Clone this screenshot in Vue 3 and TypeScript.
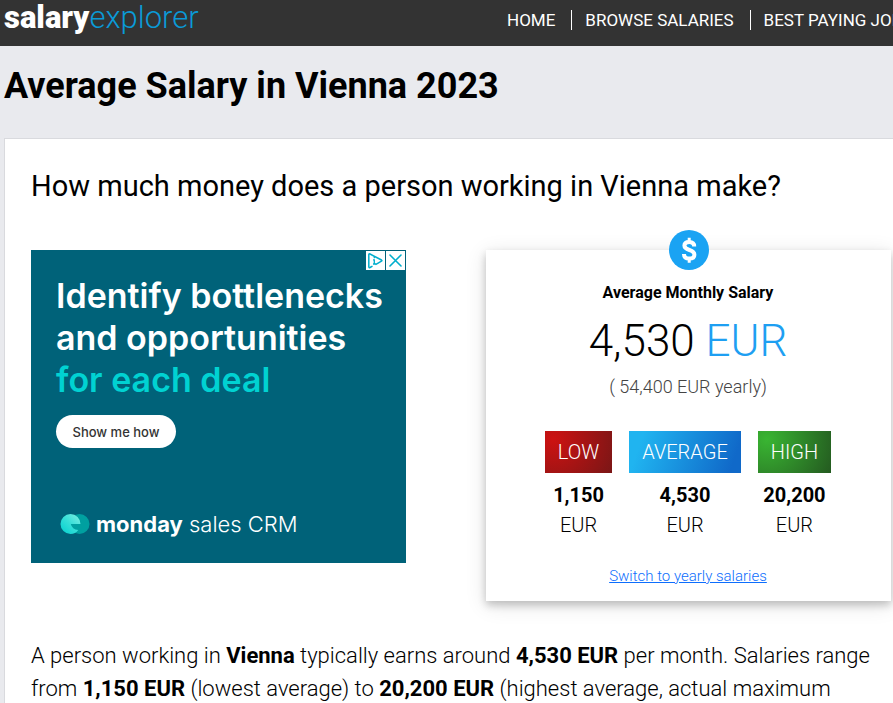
<script setup lang="ts">
interface SalaryLevel {
  key: string
  label: string
  amount: string
}

const navLinks: string[] = ['Home', 'Browse Salaries', 'Best Paying Jobs']

const levels: SalaryLevel[] = [
  { key: 'low', label: 'Low', amount: '1,150' },
  { key: 'average', label: 'Average', amount: '4,530' },
  { key: 'high', label: 'High', amount: '20,200' },
]
</script>

<template>
  <div class="page">
    <header class="topbar">
      <a class="brand" href="#"><strong>salary</strong><span>explorer</span></a>
      <nav class="nav">
        <a v-for="link in navLinks" :key="link" href="#">{{ link }}</a>
      </nav>
    </header>

    <h1>Average Salary in Vienna 2023</h1>

    <main class="panel">
      <h2>How much money does a person working in Vienna make?</h2>

      <div class="columns">
        <aside class="ad">
          <div class="ad-controls">
            <button type="button" aria-label="Ad information">
              <svg viewBox="0 0 19 19" width="19" height="19" fill="none" stroke="#00aecd" stroke-width="1.5">
                <path d="M6.5 15.2 L4 16.5 Q2.8 17 2.8 15.8 V3.6 Q2.8 2.4 4 3 L15.5 9 Q16.4 9.6 15.5 10.2 L9.5 13.6" stroke-linejoin="round" />
                <path d="M7 8.8 H8.3 V13 M7 13 H10 M8.3 5.6 V7.2" stroke-width="1.3" />
              </svg>
            </button>
            <button type="button" aria-label="Close ad">
              <svg viewBox="0 0 19 19" width="19" height="19" fill="none" stroke="#00aecd" stroke-width="1.6">
                <path d="M4 4 L15 15 M15 4 L4 15" stroke-linecap="round" />
              </svg>
            </button>
          </div>
          <p class="ad-title">Identify bottlenecks<br />and opportunities<br /><em>for each deal</em></p>
          <button class="ad-cta" type="button">Show me how</button>
          <div class="ad-brand">
            <svg viewBox="0 0 30 22" width="30" height="22" aria-hidden="true">
              <defs>
                <linearGradient id="moon" x1="0" y1="1" x2="1" y2="0">
                  <stop offset="0" stop-color="#00cfcf" />
                  <stop offset="0.5" stop-color="#35dfd8" />
                  <stop offset="1" stop-color="#82eee2" />
                </linearGradient>
              </defs>
              <circle cx="19.5" cy="11" r="10" fill="#00a0a0" />
              <path d="M20.5 11 A10 10 0 1 0 10.5 21 Q15.5 21 18.2 17 Q12 16.5 10.8 11 Z" fill="url(#moon)" />
            </svg>
            <span><strong>monday</strong> sales CRM</span>
          </div>
        </aside>

        <section class="card">
          <svg class="coin" viewBox="0 0 40 40" width="40" height="40" aria-hidden="true">
            <circle cx="20" cy="20" r="20" fill="#1aa3f3" />
            <path d="M25.2 16.4 C25.2 13.2 23.2 11.9 20.2 11.9 C17.2 11.9 15.4 13.4 15.4 15.6 C15.4 18.2 17.2 19 20.4 20 C23.6 21 25.4 22.2 25.4 24.7 C25.4 27.1 23.4 28.6 20.2 28.6 C16.8 28.6 15 26.8 15 24" fill="none" stroke="#fff" stroke-width="4" />
            <path d="M20.2 7.8 V12 M20.2 28 V32.8" stroke="#fff" stroke-width="3" />
          </svg>
          <h3>Average Monthly Salary</h3>
          <p class="salary">4,530 <span>EUR</span></p>
          <p class="yearly">( 54,400 EUR yearly)</p>
          <ul class="levels">
            <li v-for="level in levels" :key="level.key">
              <span class="badge" :class="level.key">{{ level.label }}</span>
              <strong>{{ level.amount }}</strong>
              <span>EUR</span>
            </li>
          </ul>
          <a class="switch" href="#">Switch to yearly salaries</a>
        </section>
      </div>

      <p class="summary">
        A person working in <strong>Vienna</strong> typically earns around <strong>4,530 EUR</strong> per month.
        Salaries range from <strong>1,150 EUR</strong> (lowest average) to <strong>20,200 EUR</strong> (highest
        average, actual maximum
      </p>
    </main>
  </div>
</template>

<style>
body {
  background: #e9eaee;
}
</style>

<style scoped>
.page {
  box-sizing: border-box;
  display: flex;
  flex-direction: column;
  height: 100vh;
  overflow: hidden;
  background: #e9eaee;
  color: #000;
  font-family: Roboto, sans-serif;
  font-weight: 300;
}

h1, h2, h3, p, ul {
  margin: 0;
  padding: 0;
}

button {
  border: 0;
  padding: 0;
  font: inherit;
  cursor: pointer;
}

.topbar {
  flex: none;
  display: flex;
  justify-content: space-between;
  height: 46px;
  background: #333;
  white-space: nowrap;
}

.brand {
  padding-left: 4px;
  color: #fff;
  font-size: 31px;
  line-height: 36px;
  text-decoration: none;
}

.brand strong {
  font-weight: 900;
}

.brand span {
  color: #0a9ad7;
}

.nav {
  display: flex;
  flex: 0 0 386px;
  min-width: 0;
  padding-top: 10px;
}

.nav a {
  flex: none;
  height: 20px;
  padding-right: 16px;
  color: #fff;
  font-size: 17px;
  font-weight: 400;
  line-height: 20px;
  text-decoration: none;
  text-transform: uppercase;
}

.nav a + a {
  padding-left: 13px;
  border-left: 1px solid #fff;
}

h1 {
  padding: 19px 4px 30px;
  font-size: 36px;
  font-weight: 700;
  line-height: 43px;
}

.panel {
  flex: 1 0 auto;
  margin-left: 4px;
  padding: 28px 2px 0 26px;
  border: solid #d9dade;
  border-width: 1px 0 0 1px;
  background: #fff;
}

h2 {
  font-size: 29px;
  font-weight: 400;
  line-height: 38px;
}

.columns {
  display: flex;
  align-items: flex-start;
  gap: 80px;
  padding-top: 45px;
}

.ad {
  position: relative;
  flex: 0 0 375px;
  min-width: 0;
  box-sizing: border-box;
  height: 313px;
  padding: 25px 20px 25px 25px;
  background: #006279;
  color: #fff;
  font-family: Inter, sans-serif;
}

.ad-controls {
  position: absolute;
  top: 1px;
  right: 1px;
  display: flex;
  gap: 1px;
}

.ad-controls button {
  width: 19px;
  height: 19px;
  background: #fff;
}

.ad-controls svg {
  display: block;
}

.ad-title {
  font-size: 34px;
  font-weight: 600;
  line-height: 42px;
  white-space: nowrap;
}

.ad-title em {
  color: #00d2d2;
  font-style: normal;
}

.ad-cta {
  display: block;
  width: 120px;
  height: 33px;
  margin-top: 14px;
  border-radius: 17px;
  background: #fff;
  color: #333;
  font-size: 13px;
  font-weight: 500;
}

.ad-brand {
  display: flex;
  align-items: center;
  gap: 6px;
  margin-top: 60px;
  padding-left: 4px;
  font-size: 22px;
  line-height: 32px;
  white-space: nowrap;
}

.ad-brand strong {
  font-weight: 700;
}

.card {
  position: relative;
  flex: 1;
  box-sizing: border-box;
  display: flex;
  flex-direction: column;
  align-items: center;
  padding: 33px 17px 15px 16px;
  background: #fff;
  box-shadow: 0 4px 8px rgba(0, 0, 0, 0.2), 0 4px 20px rgba(0, 0, 0, 0.12);
}

.coin {
  position: absolute;
  top: -20px;
  left: calc(50% - 20px);
}

h3 {
  font-size: 16px;
  font-weight: 700;
  line-height: 20px;
}

.salary {
  padding-top: 10px;
  font-size: 44px;
  line-height: 56px;
}

.salary span {
  color: #1e9ff2;
}

.yearly {
  padding-top: 7px;
  color: #444;
  font-size: 18px;
  line-height: 22px;
}

.levels {
  display: flex;
  gap: 17px;
  padding-top: 33px;
  font-size: 20px;
  line-height: 30px;
  list-style: none;
}

.levels li {
  display: flex;
  flex-direction: column;
  align-items: center;
}

.levels strong {
  padding-top: 7px;
}

.badge {
  padding: 6px 13px;
  color: #fff;
  text-transform: uppercase;
}

.low {
  background: radial-gradient(circle farthest-corner at 12% 20%, #cd1212, #7a1616);
}

.average {
  background: linear-gradient(109deg, #20b4f0 12%, #1069c9 91%);
}

.high {
  background: radial-gradient(circle farthest-corner at 12% 20%, #39b532, #245a20);
}

.switch {
  padding-top: 26px;
  color: #0d6efd;
  font-size: 15px;
  line-height: 20px;
}

.summary {
  padding: 38px 8px 0 0;
  font-size: 22px;
  line-height: 33px;
}

strong {
  font-weight: 700;
}
</style>
